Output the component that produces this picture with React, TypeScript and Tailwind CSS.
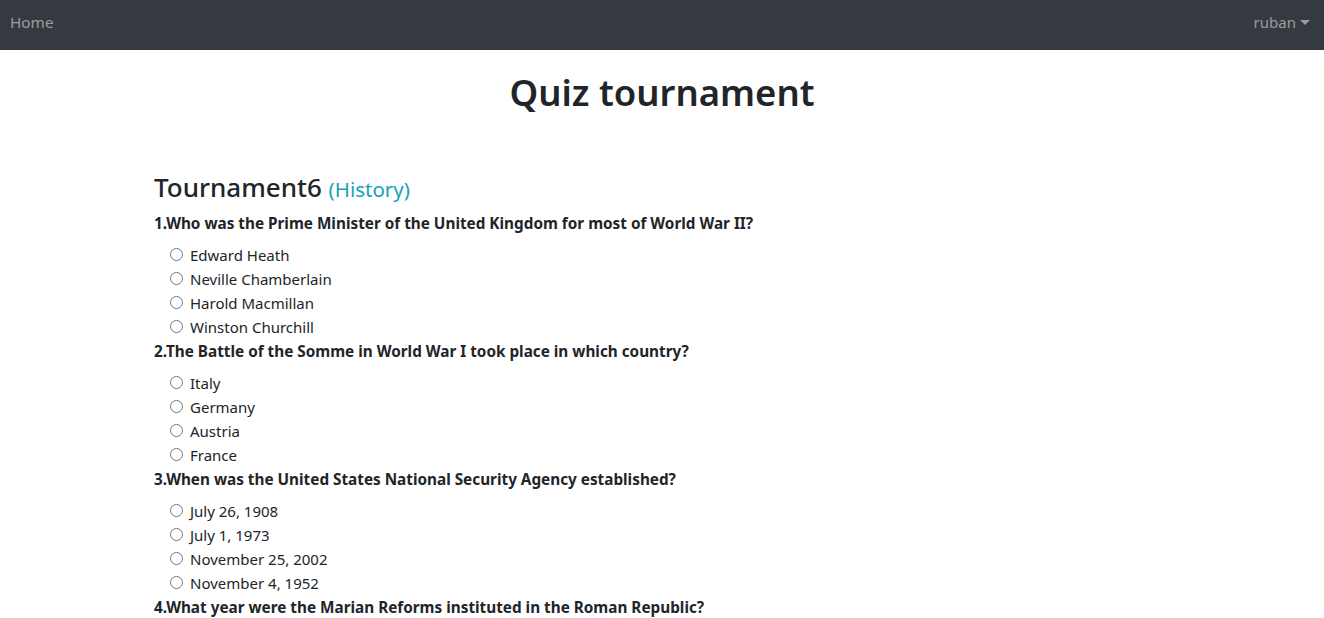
import React from 'react';

const questions = [
  {
    q: '1.Who was the Prime Minister of the United Kingdom for most of World War II?',
    options: ['Edward Heath', 'Neville Chamberlain', 'Harold Macmillan', 'Winston Churchill'],
  },
  {
    q: '2.The Battle of the Somme in World War I took place in which country?',
    options: ['Italy', 'Germany', 'Austria', 'France'],
  },
  {
    q: '3.When was the United States National Security Agency established?',
    options: ['July 26, 1908', 'July 1, 1973', 'November 25, 2002', 'November 4, 1952'],
  },
  {
    q: '4.What year were the Marian Reforms instituted in the Roman Republic?',
    options: ['107 BC', '57 BC', '42 BC', '26 BC'],
  },
];

const App = () => {
  return (
    <div className="min-h-screen bg-white text-[#212529] font-['Noto_Sans',sans-serif]">
      <nav className="h-[50px] bg-[#343a40] flex items-center justify-between pl-[10px] pr-[14px] pb-[5px]">
        <a className="text-[15.3px] text-white/50">Home</a>
        <div className="flex items-center text-[15px] text-white/50">
          <span>ruban</span>
          <span className="ml-[4px] w-0 h-0 border-l-[5px] border-r-[5px] border-t-[5px] border-l-transparent border-r-transparent border-t-white/50" />
        </div>
      </nav>

      <h1 className="mt-[18px] text-center text-[36.5px] leading-[48px] font-semibold">Quiz tournament</h1>

      <div className="pl-[154px] mt-[54px]">
        <h3 className="text-[26px] leading-[34px] font-medium">
          Tournament6 <span className="text-[20.5px] font-normal text-[#17a2b8]">(History)</span>
        </h3>

        <form className="mt-[5px]">
          {questions.map((item, i) => (
            <div key={i}>
              <p className="text-[15.3px] leading-[24px] font-bold mb-[8px]">{item.q}</p>
              <ul className="pl-[16px]">
                {item.options.map((opt) => (
                  <li key={opt} className="flex items-center h-[24px] text-[15px]">
                    <span className="w-[13px] h-[13px] rounded-full border border-[#767676] bg-white mr-[7px] -mt-[2px]" />
                    <span>{opt}</span>
                  </li>
                ))}
              </ul>
            </div>
          ))}
        </form>
      </div>
    </div>
  );
};

export default App;
